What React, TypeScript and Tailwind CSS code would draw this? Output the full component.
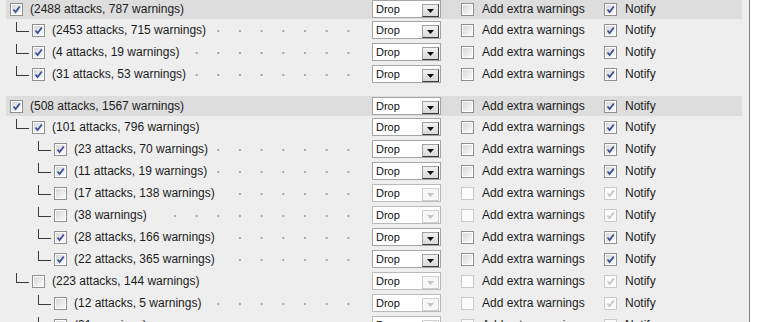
import React from 'react';

// Attack grouping tree: each row has a name cell, an action select and two toggles

type Row = {
  label: string;
  level: number;
  checked: boolean;
  leaf: boolean;
  header?: boolean;
};

const groups: Row[][] = [
  [
    { label: '(2488 attacks, 787 warnings)', level: 0, checked: true, leaf: false, header: true },
    { label: '(2453 attacks, 715 warnings)', level: 1, checked: true, leaf: true },
    { label: '(4 attacks, 19 warnings)', level: 1, checked: true, leaf: true },
    { label: '(31 attacks, 53 warnings)', level: 1, checked: true, leaf: true },
  ],
  [
    { label: '(508 attacks, 1567 warnings)', level: 0, checked: true, leaf: false, header: true },
    { label: '(101 attacks, 796 warnings)', level: 1, checked: true, leaf: false },
    { label: '(23 attacks, 70 warnings)', level: 2, checked: true, leaf: true },
    { label: '(11 attacks, 19 warnings)', level: 2, checked: true, leaf: true },
    { label: '(17 attacks, 138 warnings)', level: 2, checked: false, leaf: true },
    { label: '(38 warnings)', level: 2, checked: false, leaf: true },
    { label: '(28 attacks, 166 warnings)', level: 2, checked: true, leaf: true },
    { label: '(22 attacks, 365 warnings)', level: 2, checked: true, leaf: true },
    { label: '(223 attacks, 144 warnings)', level: 1, checked: false, leaf: false },
    { label: '(12 attacks, 5 warnings)', level: 2, checked: false, leaf: true },
    { label: '(31 warnings)', level: 2, checked: false, leaf: true },
  ],
];

function CheckBox({ checked, disabled }: { checked: boolean; disabled?: boolean }) {
  return (
    <span
      className={`flex h-[13px] w-[13px] shrink-0 items-center justify-center border ${
        disabled ? 'border-[#cacaca] bg-[#fbfbfb]' : 'border-[#8e8f8f] bg-white p-[1px]'
      }`}
    >
      <span
        className={`flex h-full w-full items-center justify-center ${
          disabled ? '' : 'bg-gradient-to-br from-[#d8d8d8] to-[#fafafa]'
        }`}
      >
        {checked && (
          <svg width="9" height="9" viewBox="0 0 9 9">
            <path
              d="M1.5 4.5 L3.6 7 L7.8 1.5"
              fill="none"
              stroke={disabled ? '#c4c4c4' : '#3a4f98'}
              strokeWidth="1.8"
            />
          </svg>
        )}
      </span>
    </span>
  );
}

function DropSelect({ disabled }: { disabled?: boolean }) {
  return (
    <div
      className={`flex h-[18px] w-[69px] shrink-0 items-center border bg-white ${
        disabled ? 'border-[#bababa]' : 'border-[#a5a5a5]'
      }`}
    >
      <span className="flex-1 pl-[3px] text-[11px] leading-none text-[#111]">Drop</span>
      <span
        className={`mr-[1px] mt-[2px] flex h-[13px] w-[17px] items-end justify-center pb-[3px] ${
          disabled
            ? 'border border-[#cfcfcf] bg-[#f7f7f7]'
            : 'border border-t-[#a0a0a0] border-l-[#a0a0a0] border-r-[#3c3c3c] border-b-[#3c3c3c] bg-gradient-to-b from-[#f2f2f2] to-[#d8d8d8]'
        }`}
      >
        <svg width="7" height="4" viewBox="0 0 7 4">
          <path d="M0 0 H7 L3.5 4 Z" fill={disabled ? '#c3c3c3' : '#111'} />
        </svg>
      </span>
    </div>
  );
}

function TreeRow({ row }: { row: Row }) {
  const disabled = !row.checked;
  return (
    <div className={`flex items-center ${row.header ? 'h-[20px] bg-[#dddddd]' : 'h-[22px]'}`}>
      <div
        className={`flex h-full w-[366px] items-center pl-[4px] pr-[14px] ${
          row.leaf
            ? 'bg-[linear-gradient(to_right,#a9a9a9_2px,transparent_2px)] bg-[length:21.7px_2px] bg-[position:16.1px_11px] bg-repeat-x bg-clip-content bg-origin-border'
            : ''
        }`}
      >
        <span className={`flex h-full items-center pr-[8px] ${row.header ? '' : 'bg-[#eeeeee]'}`}>
          {row.level > 0 && (
            <>
              <span style={{ width: (row.level - 1) * 22 + 6 }} className="shrink-0" />
              <span className="mb-[7px] h-[10px] w-[13px] shrink-0 border-b border-l border-[#3a3a3a]" />
              <span className="w-[3px] shrink-0" />
            </>
          )}
          <CheckBox checked={row.checked} />
          <span className="ml-[7px] whitespace-nowrap text-[12px] text-[#1b1b1b]">{row.label}</span>
        </span>
      </div>
      <DropSelect disabled={disabled} />
      <div className="ml-[20px] flex w-[143px] shrink-0 items-center">
        <CheckBox checked={false} disabled={disabled} />
        <span className="ml-[8px] whitespace-nowrap text-[12px] text-[#1b1b1b]">Add extra warnings</span>
      </div>
      <div className="flex items-center">
        <CheckBox checked disabled={disabled} />
        <span className="ml-[8px] text-[12px] text-[#1b1b1b]">Notify</span>
      </div>
    </div>
  );
}

export default function App() {
  return (
    <div className="flex h-[322px] w-[767px] overflow-hidden bg-white font-['Liberation_Sans',Arial,sans-serif]">
      <div className="h-full w-[750px] shrink-0 border-r border-[#7f7f7f] bg-[#eeeeee] pl-[6px] pr-[7px]">
        <div className="-mt-[1px] flex flex-col gap-[11px]">
          {groups.map((g, gi) => (
            <div key={gi} className="flex flex-col">
              {g.map((r, ri) => (
                <TreeRow key={ri} row={r} />
              ))}
            </div>
          ))}
        </div>
      </div>
    </div>
  );
}
